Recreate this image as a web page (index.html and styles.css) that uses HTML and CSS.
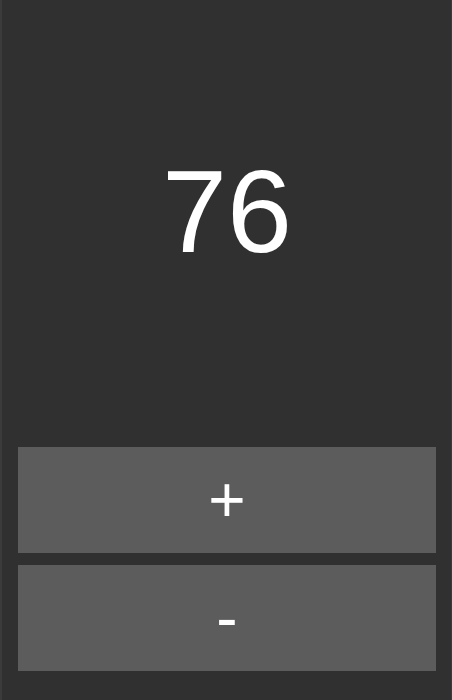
FILE: index.html
```html
<!DOCTYPE html>
<html>
<head>
<meta charset="utf-8">
<link rel="stylesheet" href="styles.css">
</head>
<body>
<div class="app">
  <div class="display">76</div>
  <div class="controls">
    <button class="btn">+</button>
    <button class="btn">-</button>
  </div>
</div>
</body>
</html>
```
FILE: styles.css
```css
html, body {
  margin: 0;
  padding: 0;
  height: 100%;
}
body {
  background: #3b3b3b;
  font-family: "Liberation Sans", Arial, sans-serif;
}
.app {
  margin: 0 1px 0 2px;
  height: 700px;
  background: #303030;
  display: flex;
  flex-direction: column;
  box-sizing: border-box;
  padding: 0 15px 29px 16px;
}
.display {
  padding-top: 144px;
  text-align: center;
  color: #ffffff;
  font-size: 117px;
  line-height: normal;
}
.controls {
  margin-top: auto;
  display: flex;
  flex-direction: column;
  gap: 12px;
}
.btn {
  height: 106px;
  border: none;
  margin: 0;
  padding: 0;
  background: #5c5c5c;
  color: #ffffff;
  font-family: "Liberation Sans", Arial, sans-serif;
  font-size: 64px;
  display: flex;
  align-items: center;
  justify-content: center;
}
```
